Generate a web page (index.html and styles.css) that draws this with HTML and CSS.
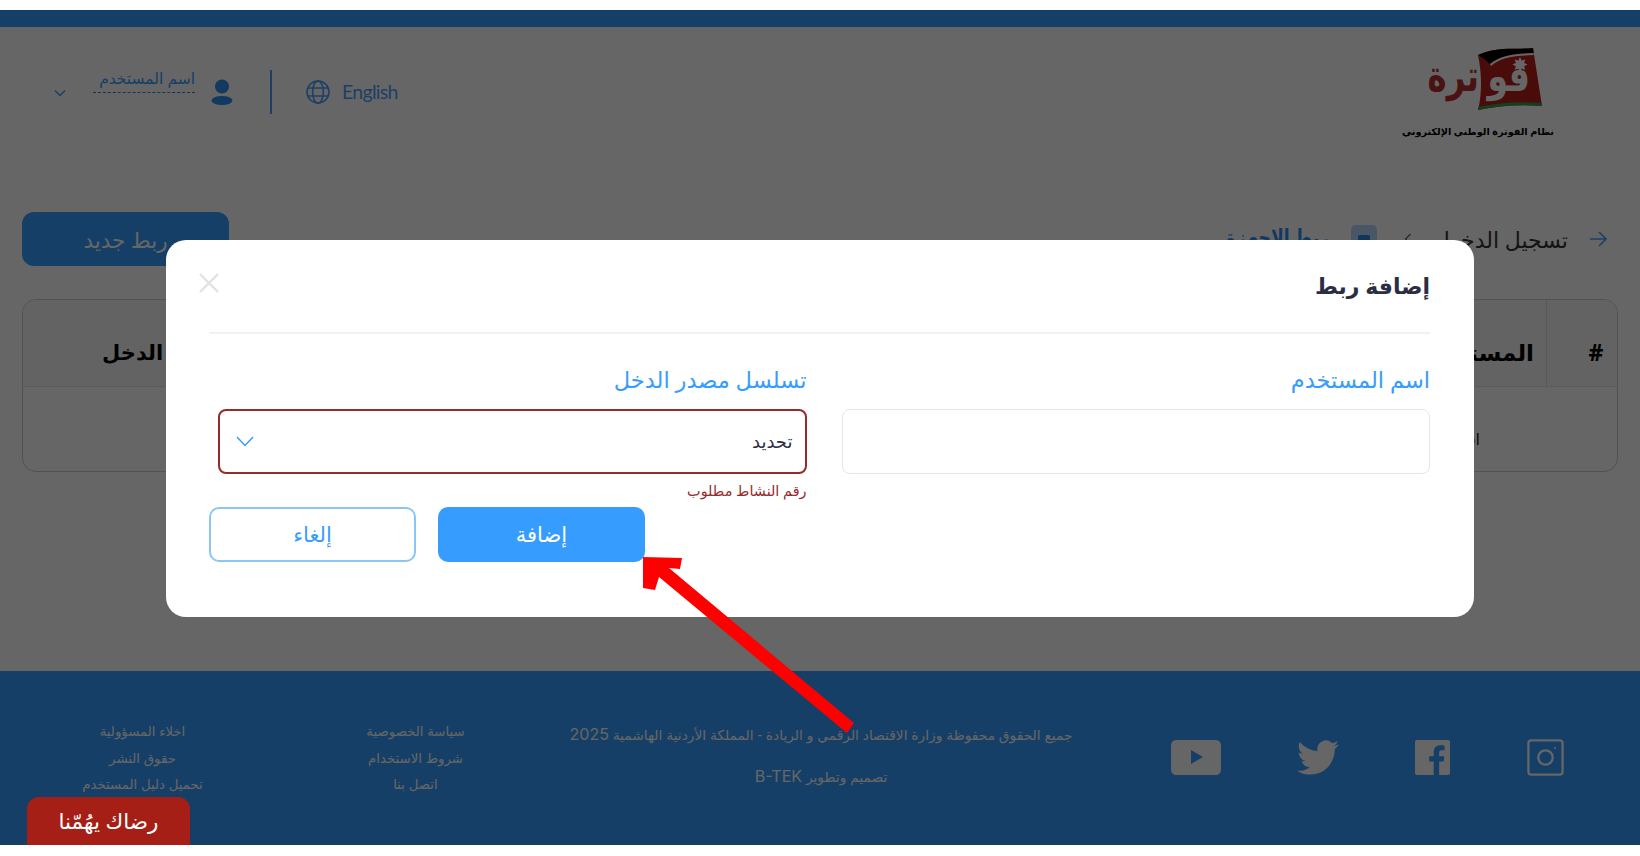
FILE: index.html
```html
<!DOCTYPE html>
<html lang="ar" dir="rtl">
<head>
  <meta charset="UTF-8" />
  <meta name="viewport" content="width=device-width, initial-scale=1.0"/>
  <title>فوترة - ربط الاجهزة</title>
  <link rel="stylesheet" href="styles.css">
</head>
<body>
<div class="shot">
  <div class="topbar"></div>

  <header class="site-head">
    <a class="logo" href="#">
      <svg class="logo-art" viewBox="0 0 160 100" width="160" height="100">
        <path d="M80 11 C100 2 118 6 135 4 L144 62 C120 60 100 62 80 66 C84 50 84 30 80 11 Z" fill="#b81c1c"/>
        <path d="M80 11 C100 2 118 6 135 4 L135.6 9 C118 10 104 10 92 20 C88 16 84 13 80 11 Z" fill="#000"/>
        <path d="M92 20 C104 10 118 10 135.6 9 L135.8 11 C118 12 104 12 93 22 Z" fill="#fff"/>
        <path d="M80 66 C100 62 120 60 144 62 L143.4 59 C120 57 100 59 80 63 Z" fill="#2e9e4f"/>
        <path d="M122 13 l1.6 3.4 3.6 -1 -1 3.6 3.4 1.6 -3.4 1.6 1 3.6 -3.6 -1 -1.6 3.4 -1.6 -3.4 -3.6 1 1 -3.6 -3.4 -1.6 3.4 -1.6 -1 -3.6 3.6 1 Z" fill="#fff"/>
        <text class="logo-word logo-word-in" transform="translate(132 47) scale(.92 1.2)">فو</text>
        <text class="logo-word logo-word-out" transform="translate(81 47) scale(.9 1.2)">ترة</text>
      </svg>
      <span class="logo-sub">نظام الفوترة الوطني الإلكتروني</span>
    </a>
    <div class="head-tools">
      <a class="lang" href="#">
        <span>English</span>
        <svg class="globe" viewBox="0 0 24 24" width="24" height="24" fill="none" stroke="currentColor" stroke-width="1.6">
          <circle cx="12" cy="12" r="11"/>
          <ellipse cx="12" cy="12" rx="5.4" ry="11"/>
          <path d="M2 8h20M2 16h20"/>
        </svg>
      </a>
      <span class="tool-sep"></span>
      <svg class="person" viewBox="0 0 22 26" width="22" height="26">
        <circle cx="11" cy="7.5" r="7"/>
        <ellipse cx="11" cy="21.5" rx="10.5" ry="4.5"/>
      </svg>
      <div class="user-name">
        <span>اسم المستخدم</span>
      </div>
      <svg class="user-caret" viewBox="0 0 12 8" width="12" height="8" fill="none" stroke="currentColor" stroke-width="1.4">
        <path d="M1 1.5l5 5 5-5"/>
      </svg>
    </div>
  </header>

  <main class="content">
    <div class="page-bar">
      <nav class="crumbs">
        <svg class="crumb-arrow" viewBox="0 0 18 16" width="18" height="16" fill="none" stroke="currentColor" stroke-width="1.6">
          <path d="M1 8h16M10 1l7 7-7 7"/>
        </svg>
        <span class="crumb-back">تسجيل الدخول</span>
        <svg class="crumb-sep" viewBox="0 0 8 12" width="8" height="12" fill="none" stroke="currentColor" stroke-width="1.3">
          <path d="M6.5 1l-5 5 5 5"/>
        </svg>
        <span class="crumb-icon"><i></i></span>
        <span class="crumb-now">ربط الاجهزة</span>
      </nav>
      <button class="btn-new">ربط جديد</button>
    </div>

    <div class="table-card">
      <div class="table-head">
        <div class="th th-num">#</div>
        <div class="th">المستخدم</div>
        <div class="th th-last">مصدر الدخل</div>
      </div>
      <div class="table-row">
        <div class="td-num"></div>
        <div class="td">اسم</div>
      </div>
    </div>
  </main>

  <footer class="site-foot">
    <div class="socials">
      <svg class="soc" viewBox="0 0 39 39" width="39" height="37" fill="none" stroke="currentColor" stroke-width="2.4">
        <rect x="1.5" y="1.5" width="36" height="36" rx="3"/>
        <circle cx="19.5" cy="19.5" r="7.6"/>
        <circle cx="29.5" cy="9.5" r="1" fill="currentColor" stroke="none"/>
      </svg>
      <svg class="soc" viewBox="0 0 24 24" width="35" height="35" fill="currentColor">
        <path d="M22.676 0H1.324C.593 0 0 .593 0 1.324v21.352C0 23.408.593 24 1.324 24h11.494v-9.294H9.689v-3.621h3.129V8.41c0-3.099 1.894-4.785 4.659-4.785 1.325 0 2.464.097 2.796.141v3.24h-1.921c-1.5 0-1.792.721-1.792 1.771v2.311h3.584l-.465 3.63H16.56V24h6.115c.733 0 1.325-.592 1.325-1.324V1.324C24 .593 23.408 0 22.676 0"/>
      </svg>
      <svg class="soc" viewBox="0 0 24 20" width="42" height="35" fill="currentColor">
        <path d="M23.953 2.57a10 10 0 01-2.825.775 4.958 4.958 0 002.163-2.723c-.951.555-2.005.959-3.127 1.184a4.92 4.92 0 00-8.384 4.482C7.69 6.095 4.067 4.13 1.64 1.162a4.822 4.822 0 00-.666 2.475c0 1.71.87 3.213 2.188 4.096a4.904 4.904 0 01-2.228-.616v.06a4.923 4.923 0 003.946 4.827 4.996 4.996 0 01-2.212.085 4.936 4.936 0 004.604 3.417 9.867 9.867 0 01-6.102 2.105c-.39 0-.779-.023-1.17-.067a13.995 13.995 0 007.557 2.209c9.053 0 13.998-7.496 13.998-13.985 0-.21 0-.42-.015-.63A9.935 9.935 0 0024 2.59z"/>
      </svg>
      <svg class="soc" viewBox="0 0 50 35" width="50" height="35">
        <path fill="currentColor" fill-rule="evenodd" d="M6 0h38c4 0 6 2 6 6v23c0 4-2 6-6 6H6c-4 0-6-2-6-6V6c0-4 2-6 6-6zM20 10v14l12-7z"/>
      </svg>
    </div>
    <div class="copy">
      <p>جميع الحقوق محفوظة وزارة الاقتصاد الرقمي و الريادة - المملكة الأردنية الهاشمية <span class="latin">2025</span></p>
      <p>تصميم وتطوير <span class="latin">B-TEK</span></p>
    </div>
    <ul class="foot-links">
      <li>سياسة الخصوصية</li>
      <li>شروط الاستخدام</li>
      <li>اتصل بنا</li>
    </ul>
    <ul class="foot-links">
      <li>اخلاء المسؤولية</li>
      <li>حقوق النشر</li>
      <li>تحميل دليل المستخدم</li>
    </ul>
  </footer>

  <div class="overlay">
    <div class="modal">
      <div class="modal-head">
        <h2>إضافة ربط</h2>
        <svg class="modal-close" viewBox="0 0 20 20" width="20" height="20" fill="none" stroke="currentColor" stroke-width="2.4">
          <path d="M1 1l18 18M19 1L1 19"/>
        </svg>
      </div>
      <div class="modal-form">
        <div class="field">
          <label for="username">اسم المستخدم</label>
          <input class="text-input" type="text" id="username" />
        </div>
        <div class="field">
          <label>تسلسل مصدر الدخل</label>
          <div class="fake-select">
            <span>تحديد</span>
            <svg viewBox="0 0 18 11" width="18" height="11" fill="none" stroke="currentColor" stroke-width="1.5">
              <path d="M1 1l8 8.5L17 1"/>
            </svg>
          </div>
          <p class="field-error">رقم النشاط مطلوب</p>
        </div>
      </div>
      <div class="modal-btns">
        <button class="btn btn-add">إضافة</button>
        <button class="btn btn-cancel">إلغاء</button>
      </div>
    </div>
  </div>

  <a class="feedback" href="#">رضاك يهُمّنا</a>

  <svg class="note-arrow" viewBox="0 0 1640 834" width="1640" height="834">
    <polygon points="643,547 682,548 680,559 669,558 854,713 847,723 659,567 655,580 643,578" fill="#ff0000"/>
  </svg>
</div>
</body>
</html>
```

FILE: styles.css
```css
* { box-sizing: border-box; }
body {
  margin: 0;
  padding: 10px 0 11.5px;
  background: #fff;
  font-family: "Noto Sans", "DejaVu Sans", sans-serif;
  color: #222;
}
.shot {
  position: relative;
  height: 834.5px;
  overflow: hidden;
  display: flex;
  flex-direction: column;
  background: #fff;
}
.topbar { height: 16.5px; background: #369dff; }

/* header */
.site-head {
  display: flex;
  justify-content: space-between;
  align-items: flex-start;
  height: 185.5px;
  padding: 17.5px 82px 0 54px;
}
.logo {
  display: flex;
  flex-direction: column;
  align-items: center;
  text-decoration: none;
  color: #000;
}
.logo-art { display: block; }
.logo-word { font-family: "DejaVu Sans", sans-serif; font-size: 36px; font-weight: 700; }
.logo-word-in { fill: #fff; }
.logo-word-out { fill: #b83030; }
.logo-sub { font-size: 9.7px; font-weight: 700; margin-top: -19px; white-space: nowrap; }
.head-tools {
  display: flex;
  align-items: center;
  margin-top: 24px;
  color: #369dff;
}
.lang {
  display: flex;
  align-items: center;
  gap: 12px;
  color: #4a9fff;
  text-decoration: none;
  font-family: "Lato", sans-serif;
  font-size: 19.5px;
  letter-spacing: -.7px;
}
.tool-sep { width: 2px; height: 44px; background: #4a9fff; margin: 0 34px 0 37px; }
.person { fill: #2f8ff0; }
.user-name {
  width: 102px;
  margin: 0 16px 22px 0;
  font-size: 15.5px;
  line-height: 20px;
  padding-bottom: 4px;
  border-bottom: 1px dashed #3a7fc0;
}
.user-caret { margin-right: 27px; margin-top: 2px; }

/* page content */
.content { padding: 0 0 0 22px; }
.page-bar { display: flex; justify-content: space-between; align-items: center; }
.crumbs { display: flex; align-items: center; padding-right: 33px; font-size: 22px; }
.crumb-arrow { color: #4a9fff; margin-left: 21px; }
.crumb-back { white-space: nowrap; color: #333; }
.crumb-sep { color: #666; margin: 0 22px 0 27px; }
.crumb-icon {
  display: flex;
  align-items: center;
  justify-content: center;
  width: 26px;
  height: 28px;
  border-radius: 5px;
  background: #b6d6ff;
  margin-left: 22px;
}
.crumb-icon i { width: 12px; height: 8px; background: #2f7fe0; border-radius: 2px; }
.crumb-now {
  display: inline-block;
  color: #2f8ff0;
  font-size: 24px;
  font-weight: 700;
  white-space: nowrap;
  margin-bottom: 6px;
  transform: scaleX(.72);
  transform-origin: right center;
}
.btn-new {
  width: 207px;
  height: 54px;
  border: none;
  border-radius: 12px;
  background: #369dff;
  color: #fff;
  font: inherit;
  font-size: 21.5px;
}
.table-card {
  height: 173px;
  margin: 33px 0 0;
  margin-right: 22px;
  border: 1px solid #ccc;
  border-radius: 14px;
  overflow: hidden;
  width: 1596px;
}
.table-head {
  display: grid;
  grid-template-columns: 71px 1fr auto;
  height: 87px;
  border-bottom: 1px solid #e3e3e3;
  background: #f7f7f7;
}
.th {
  padding: 36px 12px 0 0;
  font-size: 23px;
  font-weight: 700;
  color: #000;
  white-space: nowrap;
}
.th-num { padding: 36px 0 0 28px; text-align: center; border-left: 1px solid #ddd; }
.th-last { padding: 38px 0 0 79px; font-size: 21px; }
.table-row { display: grid; grid-template-columns: 71px 1fr; }
.td { padding: 41px 66px 0 0; font-size: 16px; color: #222; }

/* footer */
.site-foot {
  margin-top: auto;
  height: 173.5px;
  display: grid;
  grid-template-columns: 475px 538px 273px 273px;
  align-items: center;
  padding: 0 75px 0 6px;
  background: #369dff;
  color: #fff;
}
.socials { display: flex; align-items: center; gap: 76px; padding-left: 80px; }
.soc { display: block; flex: none; }
.copy { text-align: center; font-size: 13.8px; font-family: "Liberation Sans", "DejaVu Sans", sans-serif; margin-top: -3px; }
.copy p { margin: 0; line-height: 41px; white-space: nowrap; }
.latin { font-family: "Inter", sans-serif; font-size: 16px; }
.foot-links { list-style: none; margin: 2px 0 0; padding: 0; text-align: center; font-size: 13.3px; line-height: 26.5px; font-family: "Liberation Sans", "DejaVu Sans", sans-serif; }

/* dialog */
.overlay {
  position: absolute;
  inset: 0;
  display: flex;
  justify-content: center;
  align-items: flex-start;
  padding-top: 229.5px;
  background: rgba(0, 0, 0, .6);
}
.modal {
  width: 1308px;
  height: 377px;
  padding: 0 44px 0 43px;
  background: #fff;
  border-radius: 20px;
}
.modal-head {
  display: flex;
  justify-content: space-between;
  align-items: flex-start;
  height: 94px;
  padding-top: 25px;
  border-bottom: 2px solid #f1f1f1;
}
.modal-head h2 { margin: 0; font-size: 22px; line-height: 40px; font-weight: 700; color: #2b2d42; }
.modal-close { color: #e2e2e2; margin: 8px 0 0 -10px; }
.modal-form {
  display: grid;
  grid-template-columns: 588px 588.5px;
  gap: 35.5px;
  padding: 31px 0 0 9px;
  height: 141px;
}
.field label { display: block; height: 30px; margin-bottom: 14px; font-size: 22.5px; line-height: 30px; color: #369dff; }
.text-input {
  display: block;
  width: 100%;
  height: 65px;
  border: 1px solid #e5e5e5;
  border-radius: 8px;
  background: #fff;
}
.fake-select {
  display: flex;
  justify-content: space-between;
  align-items: center;
  height: 65px;
  padding: 0 12px 0 16px;
  border: 2px solid #962b2b;
  border-radius: 8px;
  font-size: 18px;
  color: #2b2d42;
}
.fake-select svg { color: #369dff; }
.field-error { margin: 7px 0 0; font-size: 14.4px; line-height: 20px; color: #962b2b; }
.modal-btns { display: flex; justify-content: flex-end; gap: 22px; margin-top: 32px; }
.btn {
  width: 207px;
  height: 55px;
  border-radius: 10px;
  font: inherit;
  font-size: 21px;
}
.btn-add { border: none; background: #369dff; color: #fff; }
.btn-cancel { border: 2px solid #8cc6f7; background: #fff; color: #369dff; }

/* pinned on top of the dim layer */
.feedback {
  position: absolute;
  left: 27px;
  bottom: 0;
  width: 163px;
  height: 48px;
  display: flex;
  align-items: center;
  justify-content: center;
  border-radius: 12px 12px 0 0;
  background: #a51f17;
  color: #fff;
  font-size: 21.5px;
  text-decoration: none;
}
.note-arrow { position: absolute; left: 0; top: 0; pointer-events: none; }
```
